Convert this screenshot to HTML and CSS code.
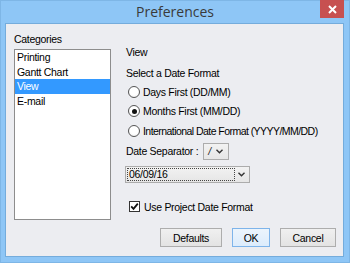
FILE: index.html
```html
<!DOCTYPE html>
<html>
<head>
<meta charset="utf-8">
<link rel="stylesheet" href="styles.css">
</head>
<body>
<div class="window">
  <div class="titlebar">
    <span class="title">Preferences</span>
    <div class="close">
      <svg width="9" height="9" viewBox="0 0 9 9"><path d="M1 1 L8 8 M8 1 L1 8" stroke="#fff" stroke-width="2"/></svg>
    </div>
  </div>
  <div class="client">
    <div class="left">
      <div class="label">Categories</div>
      <ul class="list">
        <li>Printing</li>
        <li>Gantt Chart</li>
        <li class="selected">View</li>
        <li>E-mail</li>
      </ul>
    </div>
    <div class="right">
      <div class="heading">View</div>
      <div class="label sub">Select a Date Format</div>
      <div class="radios">
        <div class="radio-row"><span class="radio"></span><span>Days First (DD/MM)</span></div>
        <div class="radio-row"><span class="radio checked"></span><span>Months First (MM/DD)</span></div>
        <div class="radio-row"><span class="radio"></span><span class="narrow">International Date Format (YYYY/MM/DD)</span></div>
      </div>
      <div class="sep-row">
        <span>Date Separator :</span>
        <div class="combo small">
          <span class="sep-val">/</span>
          <svg class="chev" width="7" height="5" viewBox="0 0 7 5"><path d="M0.5 0.8 L3.5 3.8 L6.5 0.8" fill="none" stroke="#333" stroke-width="1.4"/></svg>
        </div>
      </div>
      <div class="combo wide">
        <div class="field">06/09/16</div>
        <div class="arrow">
          <svg class="chev" width="7" height="5" viewBox="0 0 7 5"><path d="M0.5 0.8 L3.5 3.8 L6.5 0.8" fill="none" stroke="#333" stroke-width="1.4"/></svg>
        </div>
      </div>
      <div class="check-row">
        <span class="checkbox">
          <svg width="9" height="9" viewBox="0 0 9 9"><path d="M1.2 4.4 L3.5 6.8 L7.8 1.6" fill="none" stroke="#111" stroke-width="1.8"/></svg>
        </span>
        <span>Use Project Date Format</span>
      </div>
      <div class="buttons">
        <div class="btn defaults">Defaults</div>
        <div class="btn ok">OK</div>
        <div class="btn cancel">Cancel</div>
      </div>
    </div>
  </div>
</div>
</body>
</html>
```
FILE: styles.css
```css
html, body {
  margin: 0;
  padding: 0;
  background: #8ec6f6;
}
.window {
  width: 350px;
  height: 263px;
  box-sizing: border-box;
  border: 1px solid #7eb6e6;
  background: #8ec6f6;
  display: flex;
  flex-direction: column;
  font-family: "Liberation Sans", Arial, sans-serif;
  font-size: 10.5px;
  letter-spacing: -0.3px;
  color: #000;
}
.titlebar {
  height: 22px;
  position: relative;
  display: flex;
  justify-content: center;
  align-items: center;
}
.title {
  font-family: "Open Sans", sans-serif;
  font-size: 14px;
  letter-spacing: 0;
  color: #3a3a3a;
  margin-top: -1px;
}
.close {
  position: absolute;
  right: 5px;
  top: -1px;
  width: 24px;
  height: 18px;
  background: #c75050;
  display: flex;
  align-items: center;
  justify-content: center;
}
.client {
  margin: 0 5px 5px 4px;
  flex: 1;
  border: 1px solid #74acdc;
  background: #ecedf1;
  display: flex;
  padding: 8px 7px 9px 8px;
  gap: 14px;
}
.left {
  width: 97px;
  display: flex;
  flex-direction: column;
}
.label {
  line-height: 14px;
}
.list {
  list-style: none;
  margin: 3px 0 0 0;
  padding: 0;
  height: 171px;
  box-sizing: border-box;
  border: 1px solid #8d8d8d;
  background: #fff;
}
.list li {
  height: 14.5px;
  line-height: 15px;
  padding-left: 2px;
}
.list li.selected {
  background: #3399ff;
  color: #fff;
}
.right {
  flex: 1;
  display: flex;
  flex-direction: column;
}
.heading {
  line-height: 14px;
  margin-top: 13px;
  padding-left: 1px;
}
.sub {
  margin-top: 7px;
  padding-left: 1px;
}
.radios {
  margin-top: 2px;
}
.radio-row {
  height: 19.5px;
  display: flex;
  align-items: center;
  gap: 3px;
  padding-left: 3px;
}
.narrow {
  letter-spacing: -0.55px;
}
.radio {
  width: 12px;
  height: 12px;
  box-sizing: border-box;
  border: 1px solid #555;
  border-radius: 50%;
  background: radial-gradient(circle at 50% 40%, #fff 50%, #e6e6e6 100%);
  position: relative;
  flex: none;
}
.radio.checked::after {
  content: "";
  position: absolute;
  left: 2.5px;
  top: 2.5px;
  width: 5px;
  height: 5px;
  border-radius: 50%;
  background: #111;
}
.sep-row {
  margin-top: 2px;
  display: flex;
  align-items: center;
  gap: 5px;
  padding-left: 1px;
}
.combo {
  box-sizing: border-box;
  border: 1px solid #acacac;
  background: linear-gradient(#f2f2f2, #e6e6e6);
  display: flex;
  align-items: center;
}
.combo.small {
  width: 26px;
  height: 17px;
  padding-left: 4px;
  gap: 5px;
}
.sep-val {
  font-style: italic;
  color: #222;
}
.combo.wide {
  width: 125px;
  height: 17px;
  margin-top: 6px;
  padding: 1px;
}
.field {
  width: 108px;
  height: 13px;
  box-sizing: border-box;
  border: 1px dotted #444;
  line-height: 11px;
  padding-left: 1px;
}
.arrow {
  flex: 1;
  display: flex;
  justify-content: center;
  align-items: center;
}
.check-row {
  margin-top: 17px;
  display: flex;
  align-items: center;
  gap: 4px;
  padding-left: 4px;
  height: 14px;
}
.checkbox {
  width: 11px;
  height: 11px;
  box-sizing: border-box;
  border: 1px solid #333;
  background: #fff;
  display: flex;
  align-items: center;
  justify-content: center;
}
.buttons {
  margin-top: auto;
  display: flex;
  justify-content: flex-end;
  gap: 10px;
}
.btn {
  height: 19px;
  box-sizing: border-box;
  border: 1px solid #adadad;
  background: linear-gradient(#f0f0f0, #e3e3e3);
  display: flex;
  align-items: center;
  justify-content: center;
}
.btn.defaults { width: 62px; }
.btn.ok {
  width: 38px;
  border-color: #7eb4ea;
  background: linear-gradient(#ecf4fc, #dcecfc);
}
.btn.cancel { width: 56px; }
```
